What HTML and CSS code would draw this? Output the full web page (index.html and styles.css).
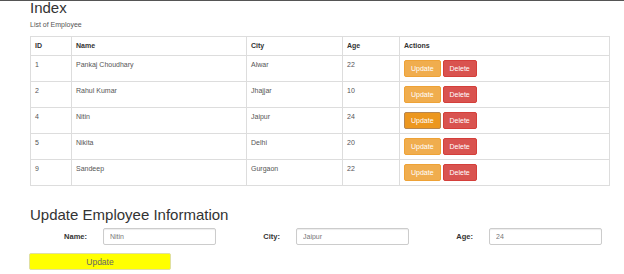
FILE: index.html
```html
<!DOCTYPE html>
<html>
<head>
  <meta charset="UTF-8">
  <title>Index</title>
  <link rel="stylesheet" href="styles.css">
</head>
<body>
<div class='topbar'></div>
<div class='container'>
  <h2>Index</h2>
  <p class='subtitle'>List of Employee</p>
  <table class='emp-table'>
    <colgroup>
      <col class='c-id'><col class='c-name'><col class='c-city'><col class='c-age'><col>
    </colgroup>
    <thead>
      <tr><th>ID</th><th>Name</th><th>City</th><th>Age</th><th>Actions</th></tr>
    </thead>
    <tbody>
      <tr><td>1</td><td>Pankaj Choudhary</td><td>Alwar</td><td>22</td>
        <td><button class='btn btn-warning'>Update</button> <button class='btn btn-danger'>Delete</button></td></tr>
      <tr><td>2</td><td>Rahul Kumar</td><td>Jhajjar</td><td>10</td>
        <td><button class='btn btn-warning'>Update</button> <button class='btn btn-danger'>Delete</button></td></tr>
      <tr><td>4</td><td>Nitin</td><td>Jaipur</td><td>24</td>
        <td><button class='btn btn-warning active'>Update</button> <button class='btn btn-danger'>Delete</button></td></tr>
      <tr><td>5</td><td>Nikita</td><td>Delhi</td><td>20</td>
        <td><button class='btn btn-warning'>Update</button> <button class='btn btn-danger'>Delete</button></td></tr>
      <tr><td>9</td><td>Sandeep</td><td>Gurgaon</td><td>22</td>
        <td><button class='btn btn-warning'>Update</button> <button class='btn btn-danger'>Delete</button></td></tr>
    </tbody>
  </table>

  <h3>Update Employee Information</h3>
  <div class='form-row'>
    <div class='group'><label>Name:</label><input type='text' value='Nitin'></div>
    <div class='group'><label>City:</label><input type='text' value='Jaipur'></div>
    <div class='group'><label>Age:</label><input type='text' value='24'></div>
  </div>
  <button class='btn-save'>Update</button>
</div>
</body>
</html>
```

FILE: styles.css
```css
body {
  margin: 0;
  font-family: "Liberation Sans", Arial, sans-serif;
  color: #333;
  background: #fff;
}

.topbar {
  border-top: 1px solid #555;
}

.container {
  padding-left: 30px;
}

h2, h3 {
  font-size: 15px;
  font-weight: normal;
  line-height: 15px;
  margin: 0;
}

h2 {
  margin-top: -1px;
}

.subtitle {
  font-size: 7px;
  line-height: 10px;
  margin: 5px 0 6px 0;
  color: #555;
}

.emp-table {
  border-collapse: collapse;
  table-layout: fixed;
  width: 580px;
  font-size: 7px;
  line-height: 10px;
}

.c-id { width: 41px; }
.c-name { width: 175px; }
.c-city { width: 96px; }
.c-age { width: 57px; }

.emp-table th,
.emp-table td {
  border: 1px solid #ddd;
  padding: 4px 4px;
  text-align: left;
  vertical-align: top;
}

.emp-table td {
  color: #555;
}

.emp-table th {
  font-weight: bold;
}

.btn {
  display: inline-block;
  font-family: "Liberation Sans", Arial, sans-serif;
  font-size: 7px;
  line-height: 9px;
  padding: 3px 6px;
  border: 1px solid transparent;
  border-radius: 2px;
  color: #fff;
  margin: 0;
  vertical-align: top;
}

.btn-warning {
  background: #f0ad4e;
  border-color: #eea236;
}

.btn-warning.active {
  background: #ec971f;
  border-color: #b8864f;
}

.btn-danger {
  background: #d9534f;
  border-color: #d43f3a;
}

h3 {
  margin-top: 21px;
}

.form-row {
  display: flex;
  margin-top: 6px;
}

.group {
  display: flex;
  align-items: center;
  width: 193px;
}

.group label {
  width: 57px;
  margin-right: 16px;
  text-align: right;
  font-size: 7.5px;
  font-weight: bold;
}

.group input {
  width: 113px;
  height: 17px;
  box-sizing: border-box;
  border: 1px solid #ccc;
  border-radius: 2px;
  box-shadow: inset 0 1px 1px rgba(0, 0, 0, 0.075);
  padding: 0 6px;
  font-family: "Liberation Sans", Arial, sans-serif;
  font-size: 7px;
  color: #777;
}

.btn-save {
  display: block;
  width: 142px;
  height: 17px;
  margin: 8px 0 0 -1px;
  background: #ffff00;
  border: 1px solid #e0e0a0;
  border-radius: 2px;
  font-family: "Liberation Sans", Arial, sans-serif;
  font-size: 8.5px;
  color: #666;
  padding: 0;
}
```
